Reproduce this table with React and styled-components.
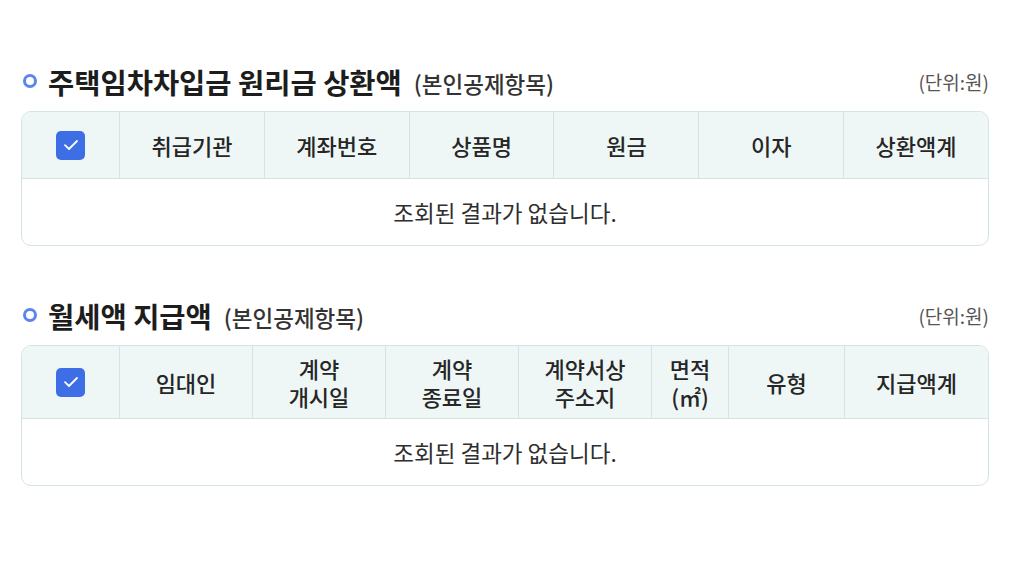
import React from 'react';
import styled, { createGlobalStyle } from 'styled-components';

const GlobalStyle = createGlobalStyle`
  * { box-sizing: border-box; }
  body {
    margin: 0;
    background: #fff;
    font-family: "Noto Sans CJK KR", "Noto Sans", sans-serif;
    color: #222;
  }
`;

const Page = styled.main`
  width: 1024px;
  padding: 60px 35px 0 21px;
  display: flex;
  flex-direction: column;
  gap: 48px;
`;

const Section = styled.section`
  display: flex;
  flex-direction: column;
  gap: 9px;
`;

const TitleBar = styled.div`
  display: flex;
  align-items: center;
  height: 42px;
`;

const Bullet = styled.span`
  width: 14px;
  height: 14px;
  border-radius: 50%;
  border: 3.5px solid #5a86ee;
  margin: 0 11px 0 2px;
  flex-shrink: 0;
`;

const Title = styled.h2`
  margin: 0;
  font-size: 28.5px;
  font-weight: 700;
  color: #1d1d1d;
`;

const Sub = styled.span`
  margin-left: 12px;
  font-size: 22.5px;
  font-weight: 500;
  color: #333;
  padding-top: 3px;
`;

const Unit = styled.span`
  margin-left: auto;
  font-size: 19px;
  color: #555;
`;

const Table = styled.div`
  border: 1px solid #d2e4e6;
  border-radius: 10px;
  overflow: hidden;
`;

const HeadRow = styled.div`
  display: grid;
  grid-template-columns: ${p => p.cols};
  height: ${p => p.h}px;
  background: #eef6f6;
  border-bottom: 1px solid #d2e4e6;
`;

const HeadCell = styled.div`
  display: flex;
  align-items: center;
  justify-content: center;
  text-align: center;
  white-space: pre-line;
  font-size: 22px;
  font-weight: 500;
  line-height: 28px;
  color: #262626;
  border-left: 1px solid #d2e4e6;
  &:first-child { border-left: none; }
`;

const Check = styled.span`
  width: 29px;
  height: 29px;
  border-radius: 5px;
  background: #3d6ee6;
  display: flex;
  align-items: center;
  justify-content: center;
`;

const Empty = styled.div`
  height: 66px;
  display: flex;
  align-items: center;
  justify-content: center;
  font-size: 22.5px;
  color: #2e2e2e;
`;

function CheckBox() {
  return (
    <Check>
      <svg width="16" height="12" viewBox="0 0 16 12" fill="none">
        <path d="M2 6.2 L6 10 L14 2" stroke="#fff" strokeWidth="1.8" strokeLinecap="round" strokeLinejoin="round" />
      </svg>
    </Check>
  );
}

function DataTable({ title, cols, heads, h }) {
  return (
    <Section>
      <TitleBar>
        <Bullet />
        <Title>{title}</Title>
        <Sub>(본인공제항목)</Sub>
        <Unit>(단위:원)</Unit>
      </TitleBar>
      <Table>
        <HeadRow cols={cols} h={h}>
          <HeadCell><CheckBox /></HeadCell>
          {heads.map((t, i) => (
            <HeadCell key={i}>{t}</HeadCell>
          ))}
        </HeadRow>
        <Empty>조회된 결과가 없습니다.</Empty>
      </Table>
    </Section>
  );
}

export default function App() {
  return (
    <Page>
      <GlobalStyle />
      <DataTable
        title="주택임차차입금 원리금 상환액"
        cols="97px repeat(6, 1fr)"
        h={67}
        heads={['취급기관', '계좌번호', '상품명', '원금', '이자', '상환액계']}
      />
      <DataTable
        title="월세액 지급액"
        cols="97px 133px 133px 133px 133px 77px 116px 1fr"
        h={73}
        heads={['임대인', '계약\n개시일', '계약\n종료일', '계약서상\n주소지', '면적\n(㎡)', '유형', '지급액계']}
      />
    </Page>
  );
}
